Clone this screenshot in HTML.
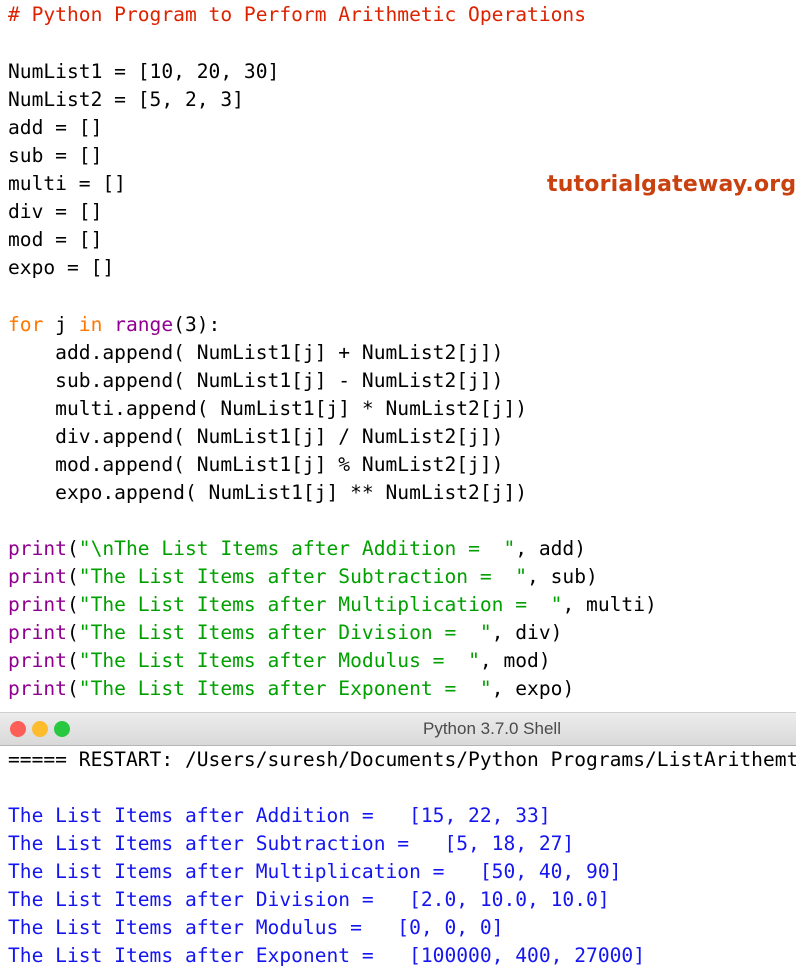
<!DOCTYPE html>
<html><head><meta charset="utf-8"><style>
body{margin:0;width:796px;height:972px;background:#fff;overflow:hidden;position:relative}
.l{position:absolute;left:8px;right:0;overflow:hidden;white-space:pre;font-family:"DejaVu Sans Mono","Liberation Mono",monospace;font-size:19.6px;line-height:28px;height:28px;color:#000}
.c{color:#dd2200}.k{color:#ff7700}.b{color:#900090}.s{color:#00a000}.o{color:#1515f0}
#bar{position:absolute;left:0;top:712px;width:796px;height:32px;background:linear-gradient(#ececec,#d9d9d9);border-top:1px solid #cfcfcf;border-bottom:1px solid #b5b5b5}
.dot{position:absolute;top:8px;width:16px;height:16px;border-radius:50%}
#logo{position:absolute;left:547px;top:172px;font-family:"DejaVu Sans","Liberation Sans",sans-serif;font-weight:bold;font-size:22px;color:#c8410f;letter-spacing:0.2px;white-space:nowrap}
</style></head><body>
<div class="l c" style="top:1px"># Python Program to Perform Arithmetic Operations</div>
<div class="l" style="top:58px">NumList1 = [10, 20, 30]</div>
<div class="l" style="top:86px">NumList2 = [5, 2, 3]</div>
<div class="l" style="top:114px">add = []</div>
<div class="l" style="top:142px">sub = []</div>
<div class="l" style="top:170px">multi = []</div>
<div class="l" style="top:198px">div = []</div>
<div class="l" style="top:226px">mod = []</div>
<div class="l" style="top:254px">expo = []</div>
<div id="logo">tutorialgateway.org</div>
<div class="l" style="top:311px"><span class="k">for</span> j <span class="k">in</span> <span class="b">range</span>(3):</div>
<div class="l" style="top:339px">    add.append( NumList1[j] + NumList2[j])</div>
<div class="l" style="top:367px">    sub.append( NumList1[j] - NumList2[j])</div>
<div class="l" style="top:395px">    multi.append( NumList1[j] * NumList2[j])</div>
<div class="l" style="top:423px">    div.append( NumList1[j] / NumList2[j])</div>
<div class="l" style="top:451px">    mod.append( NumList1[j] % NumList2[j])</div>
<div class="l" style="top:479px">    expo.append( NumList1[j] ** NumList2[j])</div>
<div class="l" style="top:535px"><span class="b">print</span>(<span class="s">"\nThe List Items after Addition =  "</span>, add)</div>
<div class="l" style="top:563px"><span class="b">print</span>(<span class="s">"The List Items after Subtraction =  "</span>, sub)</div>
<div class="l" style="top:591px"><span class="b">print</span>(<span class="s">"The List Items after Multiplication =  "</span>, multi)</div>
<div class="l" style="top:619px"><span class="b">print</span>(<span class="s">"The List Items after Division =  "</span>, div)</div>
<div class="l" style="top:647px"><span class="b">print</span>(<span class="s">"The List Items after Modulus =  "</span>, mod)</div>
<div class="l" style="top:675px"><span class="b">print</span>(<span class="s">"The List Items after Exponent =  "</span>, expo)</div>
<div id="bar">
<div class="dot" style="left:10px;background:#fc5f57"></div>
<div class="dot" style="left:32px;background:#fdbb2e"></div>
<div class="dot" style="left:54px;background:#28c940"></div>
<div style="position:absolute;left:0;width:984px;top:6px;text-align:center;font-family:'Liberation Sans',sans-serif;font-size:17px;color:#4a4a4a">Python 3.7.0 Shell</div>
</div>
<div class="l" style="top:746px">===== RESTART: /Users/suresh/Documents/Python Programs/ListArithemtic.py</div>
<div class="l o" style="top:802px">The List Items after Addition =   [15, 22, 33]</div>
<div class="l o" style="top:830px">The List Items after Subtraction =   [5, 18, 27]</div>
<div class="l o" style="top:858px">The List Items after Multiplication =   [50, 40, 90]</div>
<div class="l o" style="top:886px">The List Items after Division =   [2.0, 10.0, 10.0]</div>
<div class="l o" style="top:914px">The List Items after Modulus =   [0, 0, 0]</div>
<div class="l o" style="top:942px">The List Items after Exponent =   [100000, 400, 27000]</div>
</body></html>
